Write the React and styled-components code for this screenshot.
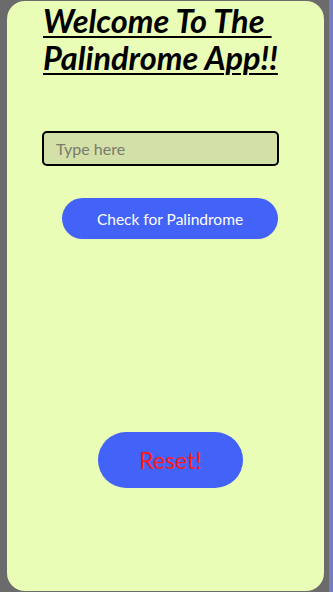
import React, { useState } from 'react';
import styled, { createGlobalStyle } from 'styled-components';

const Global = createGlobalStyle`
    html, body {
        margin: 0;
        padding: 0;
        background: #7380bd;
        height: 592px;
        overflow: hidden;
    }
`;

const Frame = styled.div`
    width: 329px;
    height: 592px;
    background: #6b6b6b;
    padding: 1px 5px 1px 7px;
    box-sizing: border-box;
`;

const Card = styled.div`
    height: 100%;
    background: #e9fdb6;
    border-radius: 18px;
    padding: 0 0 0 35px;
    box-sizing: border-box;
    display: flex;
    flex-direction: column;
    align-items: flex-start;
    font-family: Lato, "Open Sans", sans-serif;
`;

const Title = styled.h1`
    margin: 0;
    font-size: 32.5px;
    line-height: 37px;
    font-weight: 700;
    font-style: italic;
    text-decoration: underline;
    text-decoration-thickness: 2px;
    text-underline-offset: 3px;
    color: #000;
    padding: 1px 0 0 1px;
    width: 270px;
`;

const Input = styled.input`
    margin-top: 55px;
    width: 237px;
    height: 35px;
    box-sizing: border-box;
    border: 2px solid #000;
    border-radius: 5px;
    background: #d3e0a8;
    padding: 0 12px;
    font-family: Lato, "Open Sans", sans-serif;
    font-size: 16px;
    outline: none;
    &::placeholder {
        color: #7a7a6a;
    }
`;

const Button = styled.button`
    margin-left: ${p => p.$offset}px;
    margin-top: ${p => p.$top}px;
    width: ${p => p.$w}px;
    height: ${p => p.$h}px;
    border: none;
    border-radius: 999px;
    background: #4262f8;
    color: ${p => p.$color};
    font-family: Lato, "Open Sans", sans-serif;
    font-size: ${p => p.$size}px;
    cursor: pointer;
`;

export default function App() {
    const [text, setText] = useState('');
    return (
        <>
            <Global />
            <Frame>
                <Card>
                    <Title>Welcome To The&nbsp;<br />Palindrome App!!</Title>
                    <Input placeholder="Type here" value={text} onChange={e => setText(e.target.value)} />
                    <Button $offset={20} $top={32} $w={216} $h={41} $color="#ffffff" $size={15.5}>
                        Check for Palindrome
                    </Button>
                    <Button $offset={56} $top={193} $w={145} $h={56} $color="#ff1a1a" $size={23} onClick={() => setText('')}>
                        Reset!
                    </Button>
                </Card>
            </Frame>
        </>
    );
}
